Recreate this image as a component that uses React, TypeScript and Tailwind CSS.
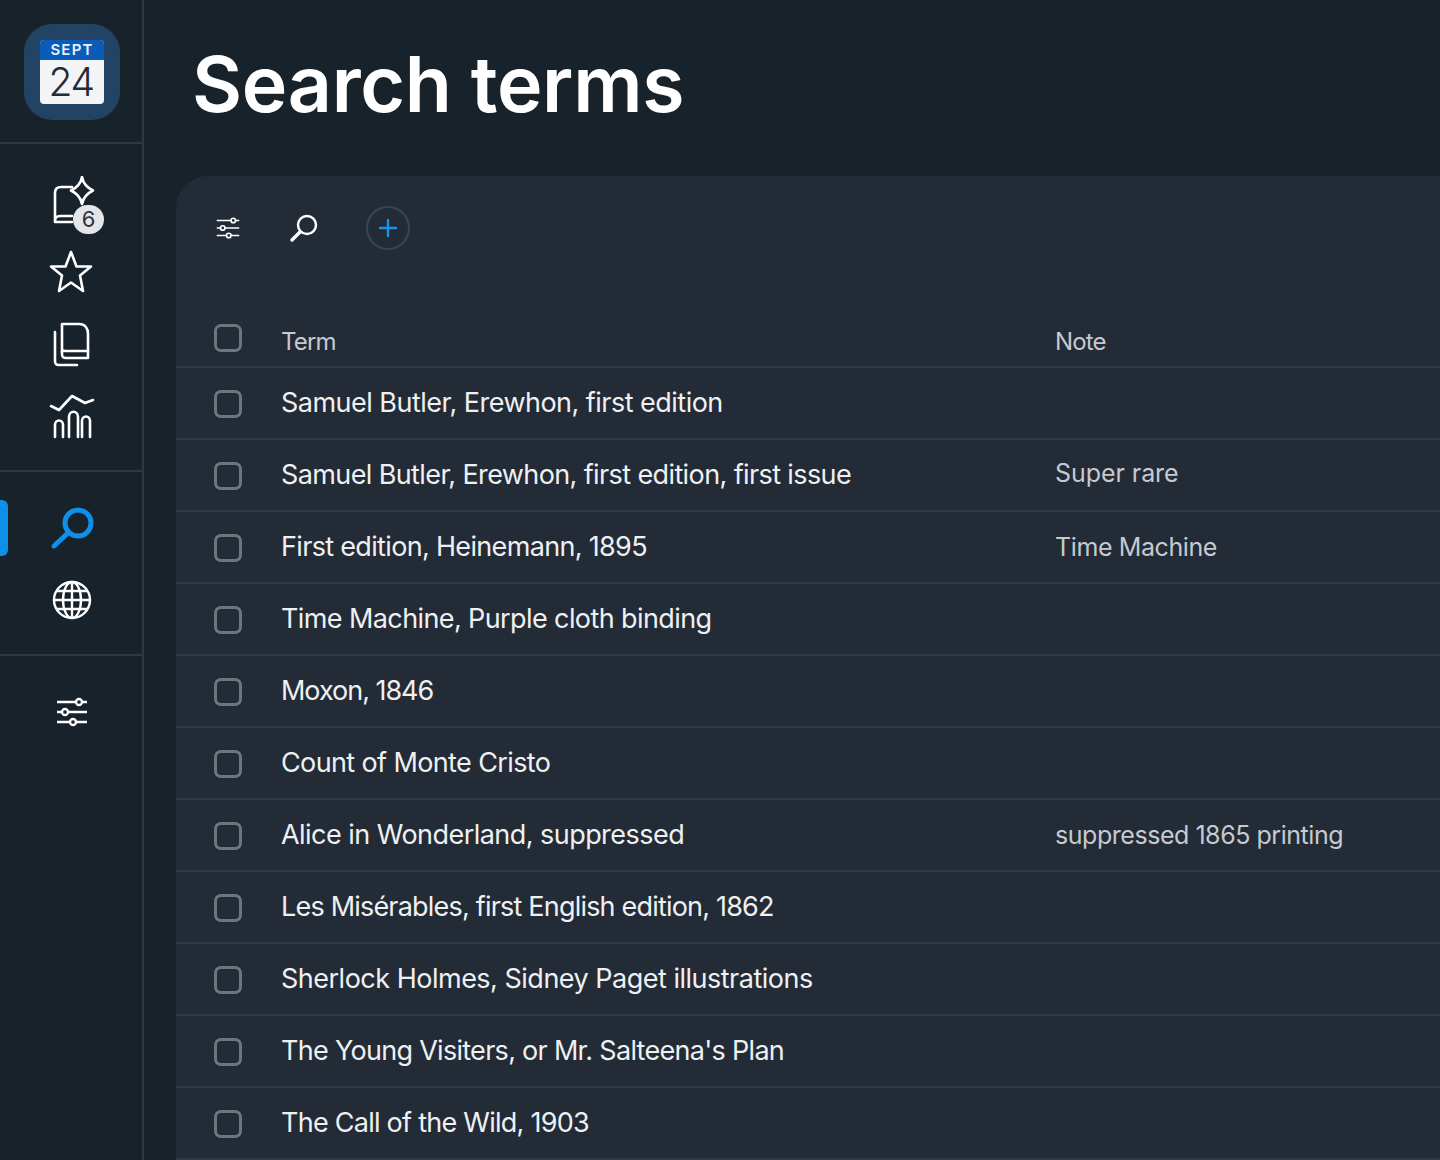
const rows: [string, string, string, string, string][] = [
  ["Samuel Butler, Erewhon, first edition", "", "", "tracking-[-0.52px]", ""],
  ["Samuel Butler, Erewhon, first edition, first issue", "Super rare", "mb-[4px]", "tracking-[-0.61px]", "tracking-[-0.06px]"],
  ["First edition, Heinemann, 1895", "Time Machine", "mt-0", "tracking-[-0.67px]", "tracking-[-0.4px]"],
  ["Time Machine, Purple cloth binding", "", "", "tracking-[-0.6px]", ""],
  ["Moxon, 1846", "", "", "tracking-[-1.02px]", ""],
  ["Count of Monte Cristo", "", "", "tracking-[-0.62px]", ""],
  ["Alice in Wonderland, suppressed", "suppressed 1865 printing", "mt-0", "tracking-[-0.54px]", "tracking-[-0.46px]"],
  ["Les Misérables, first English edition, 1862", "", "", "tracking-[-0.8px]", ""],
  ["Sherlock Holmes, Sidney Paget illustrations", "", "", "tracking-[-0.5px]", ""],
  ["The Young Visiters, or Mr. Salteena's Plan", "", "", "tracking-[-0.71px]", ""],
  ["The Call of the Wild, 1903", "", "", "tracking-[-0.74px]", ""],
];

function Sliders({ size, sw = 2 }: { size: number; sw?: number }) {
  return (
    <svg width={size} height={size} viewBox="0 0 32 32" fill="none" stroke="currentColor" strokeWidth={sw}>
      <path d="M1 6H20M26 6H31M1 16H6M12 16H31M1 26H14M20 26H31" />
      <circle cx="23" cy="6" r="3" />
      <circle cx="9" cy="16" r="3" />
      <circle cx="17" cy="26" r="3" />
    </svg>
  );
}

function Check() {
  return <div className="w-[28px] h-[28px] rounded-[7px] border-[3px] border-[#6f757d] shrink-0" />;
}

export default function App() {
  return (
    <div className="flex w-[1440px] h-[1160px] overflow-hidden bg-[#18222b] text-white font-['Inter','Liberation_Sans',sans-serif]">
      <aside className="w-[144px] shrink-0 border-r-2 border-[#2e3742] flex flex-col">
        <div className="h-[144px] shrink-0 border-b-2 border-[#2e3742] flex items-center justify-center pt-[2px] pl-[2px]">
          <div className="w-[96px] h-[96px] rounded-[28px] bg-[#224364] flex items-center justify-center">
            <div className="w-[64px] h-[64px] rounded-[4px] overflow-hidden flex flex-col bg-[#f3f4f6]">
              <div className="h-[20px] bg-[#0a5cb8] flex items-center justify-center text-[15px] font-semibold tracking-[1.2px] text-[#e8f1fb]">SEPT</div>
              <div className="flex-1 flex items-center justify-center text-[#232b36] text-[39px] leading-none font-light tracking-[-1.5px] -translate-x-[1px] -translate-y-[1px]">24</div>
            </div>
          </div>
        </div>
        <div className="h-[328px] shrink-0 border-b-2 border-[#2e3742] relative flex flex-col items-center pl-[2px] pt-[32px]">
          <div className="relative w-[50px] h-[50px] mb-[24px] translate-x-[3px]">
            <svg width="50" height="50" viewBox="0 0 50 50" fill="none" stroke="white" strokeWidth="2.6" className="absolute left-0 top-0" strokeLinejoin="round" strokeLinecap="round">
              <path d="M22 11H11C7 11 5 13 5 17V46H22M5 46C5 41 7 40 10 40H22" />
              <path d="M32 1C33 7 36 11 43 14.5C36 18 33 22 32 28C31 22 28 18 21 14.5C28 11 31 7 32 1Z" fill="#18222b" />
            </svg>
            <div className="absolute left-[23px] top-[29px] w-[31px] h-[29px] rounded-full bg-[#e3e5e8] text-[#2a323c] text-[22px] leading-[29px] text-center">6</div>
          </div>
          <svg width="44" height="44" viewBox="0 0 44 44" fill="none" stroke="white" strokeWidth="2.6" strokeLinejoin="round" className="mb-[28px] -translate-x-[1px]">
            <path d="M22 2L27.5 16.5H42L31 25.5L34 41L22 32.5L10 41L13 25.5L2 16.5H16.5Z" />
          </svg>
          <svg width="40" height="46" viewBox="0 0 40 46" fill="none" stroke="white" strokeWidth="2.6" strokeLinejoin="round" strokeLinecap="round" className="mb-[26px]">
            <path d="M10 2H27C33 2 36 6 36 12V36H14C11 36 10 35 10 32Z" />
            <path d="M10 30C10 28 11 29 14 29H36" />
            <path d="M3 10V39C3 42 4 43 7 43H25" />
          </svg>
          <svg width="46" height="46" viewBox="0 0 46 46" fill="none" stroke="white" strokeWidth="2.6" strokeLinecap="round" strokeLinejoin="round">
            <path d="M2 12L10 16L23 2L36 9L44 6" />
            <path d="M6 43V31C6 25 14 25 14 31V43M20 43V23C20 16 29 16 29 23V43M33 43V27C33 21 41 21 41 27V43" />
          </svg>
        </div>
        <div className="h-[184px] shrink-0 border-b-2 border-[#2e3742] relative flex flex-col items-center pl-[2px] pt-[34px]">
          <div className="absolute left-0 top-[28px] w-[8px] h-[56px] rounded-r-[6px] bg-[#0e90ea]" />
          <svg width="44" height="44" viewBox="0 0 44 44" fill="none" stroke="#0e90ea" strokeWidth="5" strokeLinecap="round" className="mb-[30px]">
            <circle cx="28" cy="17" r="13" />
            <path d="M18 27L4 40" />
          </svg>
          <svg width="40" height="40" viewBox="0 0 40 40" fill="none" stroke="white" strokeWidth="2.4">
            <circle cx="20" cy="20" r="18" />
            <ellipse cx="20" cy="20" rx="9" ry="18" />
            <path d="M20 2V38M2 20H38M5 11H35M5 29H35" />
          </svg>
        </div>
        <div className="flex justify-center pl-[2px] pt-[40px]">
          <Sliders size={32} sw={2.3} />
        </div>
      </aside>
      <main className="flex-1 flex flex-col min-w-0">
        <h1 className="h-[176px] pl-[48px] pt-[41px] text-[77px] leading-[86px] font-semibold tracking-[-0.3px] shrink-0 whitespace-nowrap">Search terms</h1>
        <section className="flex-1 rounded-tl-[32px] bg-[#232b36] ml-[32px]">
          <div className="h-[104px] flex items-center pl-[40px] gap-[50px]">
            <Sliders size={24} sw={2.3} />
            <svg width="28" height="28" viewBox="0 0 28 28" fill="none" stroke="white" strokeWidth="2.4" strokeLinecap="round">
              <circle cx="17" cy="11" r="9" />
              <path d="M10 18L2 26" strokeWidth="3.4" />
            </svg>
            <div className="w-[44px] h-[44px] rounded-full border-2 border-[#3c4651] flex items-center justify-center ml-[-2px]">
              <svg width="20" height="20" viewBox="0 0 20 20" stroke="#1a90e8" strokeWidth="2.4">
                <path d="M10 1V19M1 10H19" />
              </svg>
            </div>
          </div>
          <div className="h-[88px] flex border-b-2 border-[#2e3742] pl-[38px]">
            <div className="pt-[44px]"><Check /></div>
            <div className="w-[774px] ml-[39px] mt-[47px] text-[24px] leading-[30px] tracking-[-0.8px] text-[#c6cad0]">Term</div>
            <div className="mt-[47px] text-[24px] leading-[30px] tracking-[-0.9px] text-[#c6cad0]">Note</div>
          </div>
          {rows.map(([term, note, cls, trk, ntrk]) => (
            <div key={term} className="h-[72px] flex items-center border-b-2 border-[#2e3742] pl-[38px]">
              <div className="mt-[2px]"><Check /></div>
              <div className={`${trk} w-[774px] ml-[39px] text-[27px] leading-[34px] text-[#eef0f2] whitespace-nowrap`}>{term}</div>
              <div className={`${cls} ${ntrk} text-[25px] leading-[34px] text-[#c6cad0] whitespace-nowrap`}>{note}</div>
            </div>
          ))}
        </section>
      </main>
    </div>
  );
}
